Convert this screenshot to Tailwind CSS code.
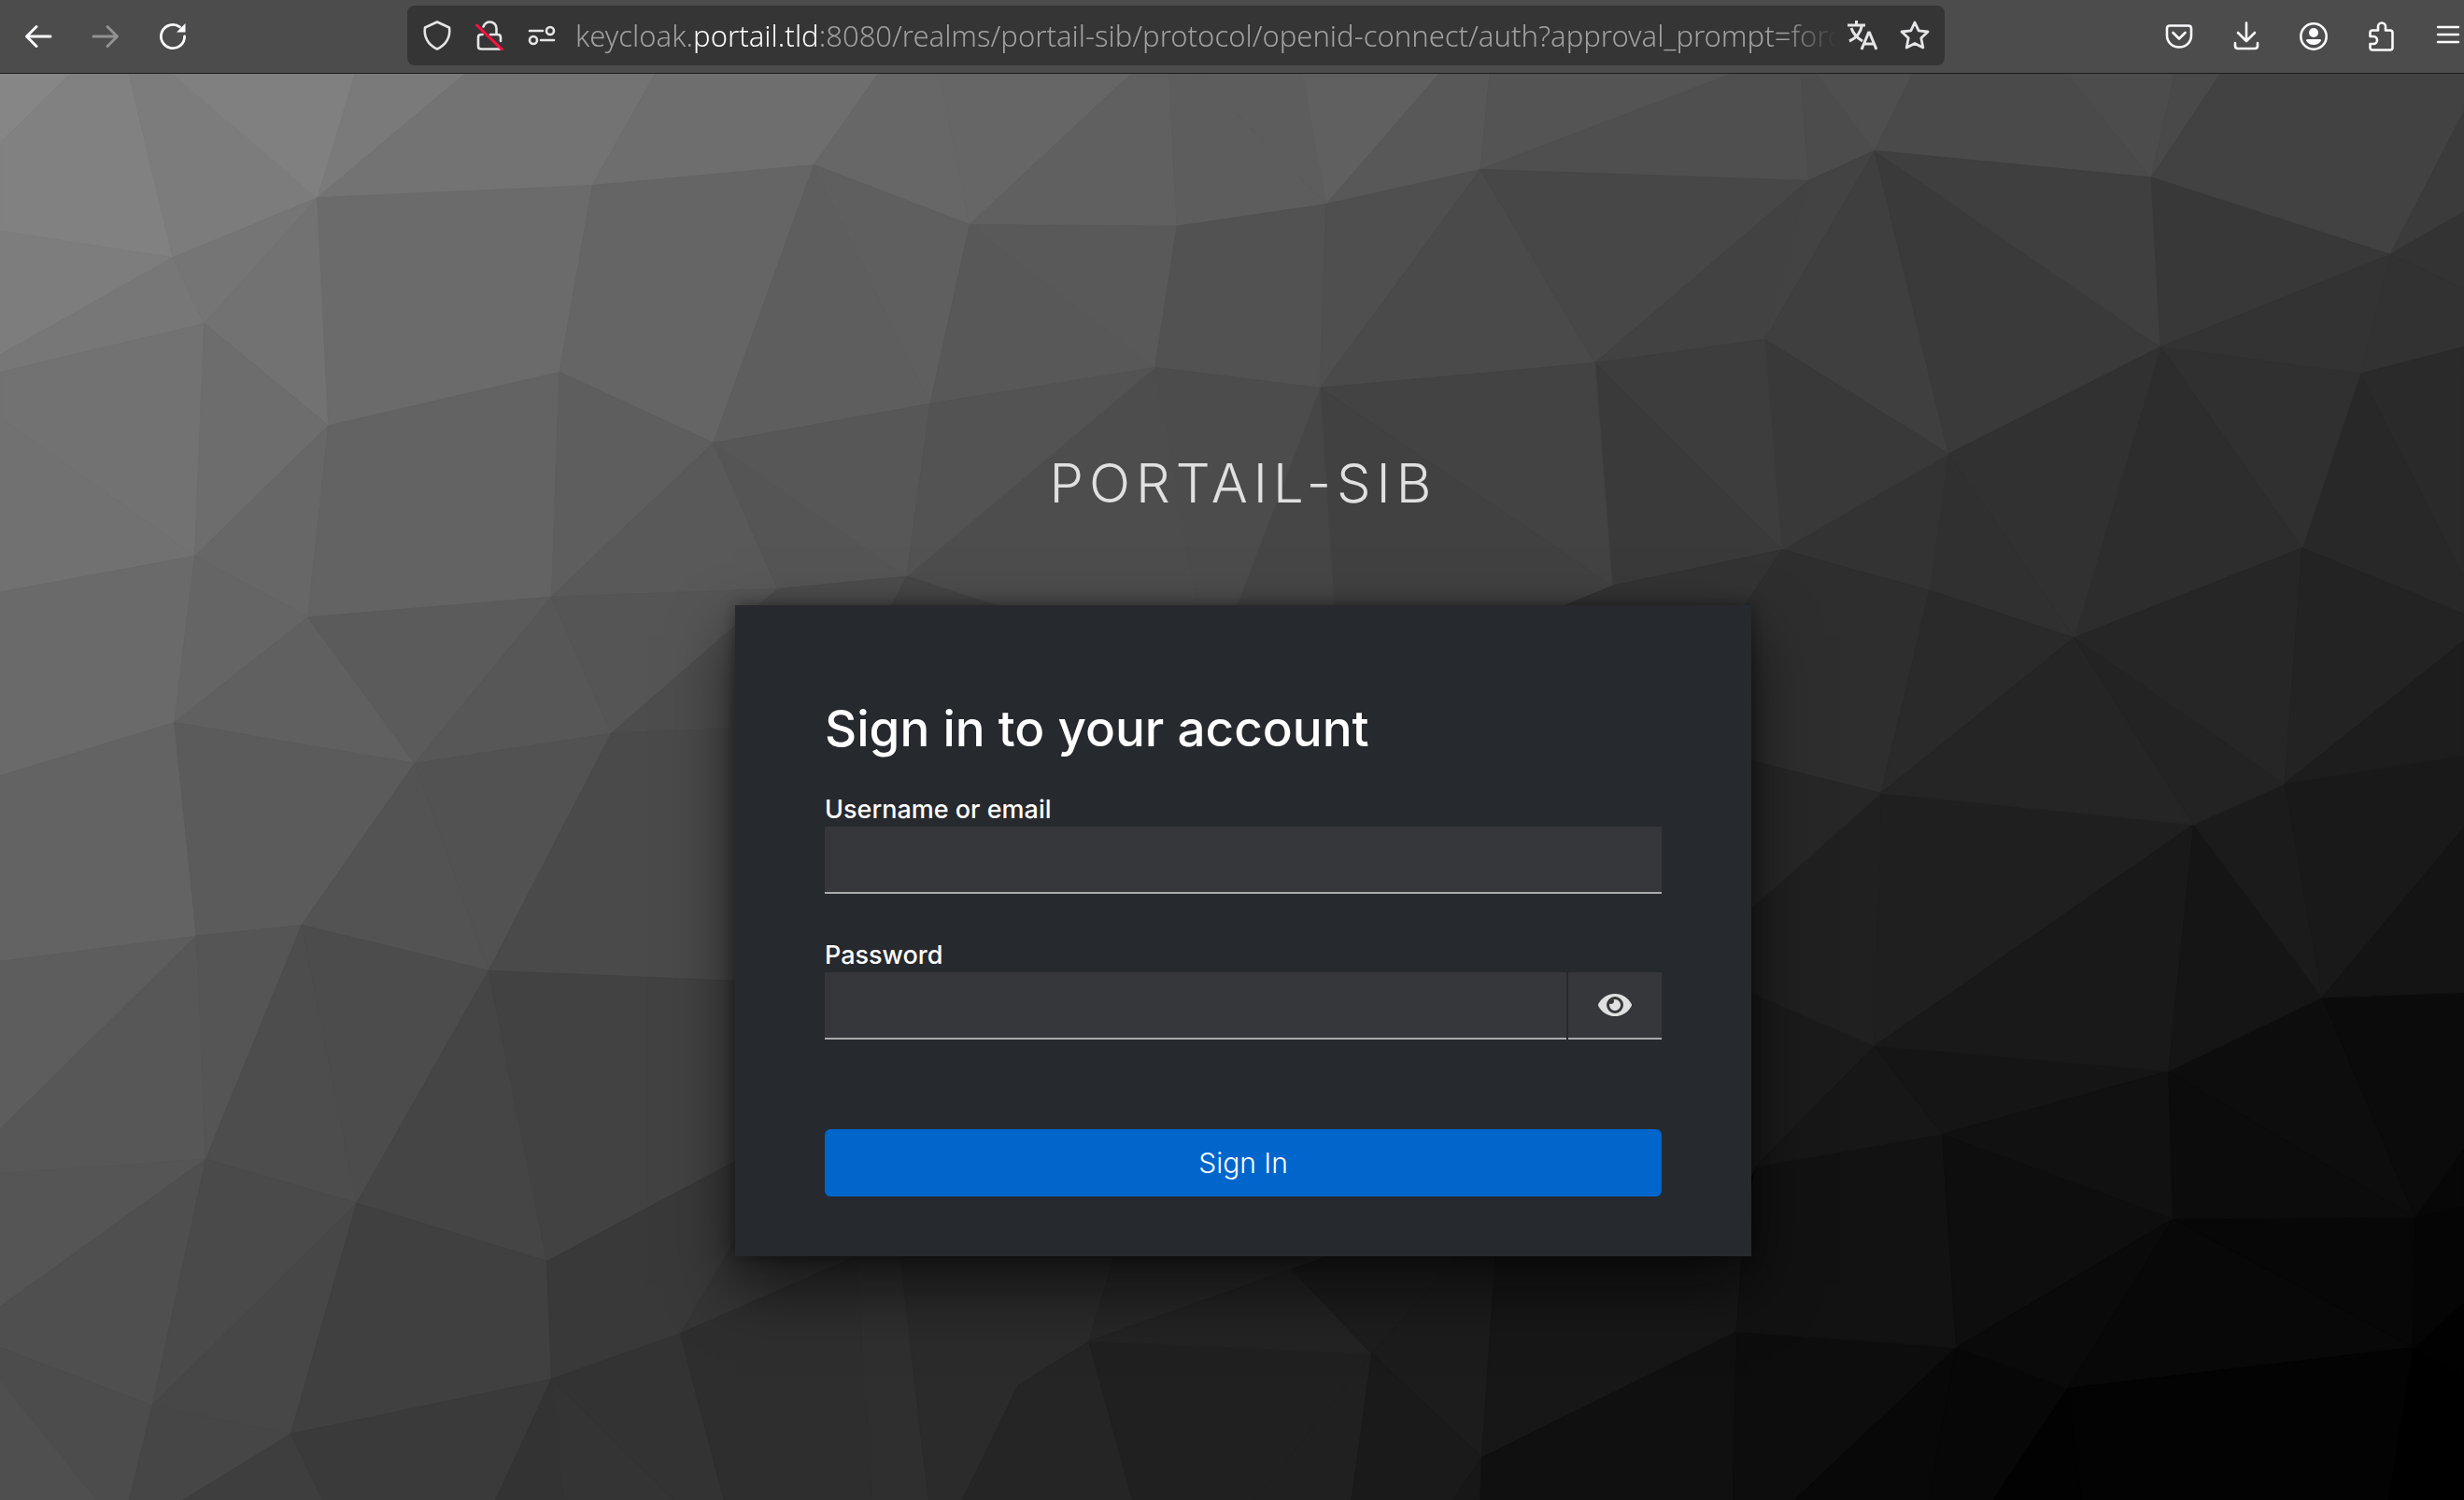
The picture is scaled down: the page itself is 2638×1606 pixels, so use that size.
<!DOCTYPE html>
<html lang="en">
<head>
<meta charset="utf-8">
<meta name="viewport" content="width=device-width, initial-scale=1">
<title>Sign in to portail-sib</title>
<script src="https://cdn.jsdelivr.net/npm/@tailwindcss/browser@4"></script>
</head>
<body class="flex min-h-screen flex-col overflow-x-hidden bg-black font-['Inter',sans-serif]">

<!-- Browser toolbar -->
<header class="flex h-[79px] shrink-0 items-center border-b border-[#1c1b1c] bg-[#4c4c4c] text-[#fbfbfe]">
  <nav class="flex w-[436px] shrink-0 gap-9 pl-[23px]" aria-label="History">
    <button type="button" aria-label="Back" class="flex w-9 justify-center">
      <svg class="size-8" viewBox="0 0 32 32" fill="none" stroke="currentColor" stroke-width="3" stroke-linecap="round" stroke-linejoin="round"><path d="M29 16H4M14 5.500 3.500 16 14 26.500"/></svg>
    </button>
    <button type="button" aria-label="Forward" disabled class="flex w-9 justify-center text-[#929292]">
      <svg class="size-8" viewBox="0 0 32 32" fill="none" stroke="currentColor" stroke-width="3" stroke-linecap="round" stroke-linejoin="round"><path d="M3 16H28M18 5.500 28.500 16 18 26.500"/></svg>
    </button>
    <button type="button" aria-label="Reload" class="flex w-9 justify-center">
      <svg class="size-8" viewBox="0 0 32 32" fill="none" stroke="currentColor" stroke-width="2.800" stroke-linecap="round"><path d="M28.600 16A12.600 12.600 0 1 1 23.500 5.900"/><path d="M29.500 2v9.500h-9.500z" fill="currentColor" stroke="none"/></svg>
    </button>
  </nav>

  <div class="mb-[2px] flex h-16 min-w-0 flex-1 items-center rounded-lg bg-[#353535] px-1 text-[#e6e6e8]">
    <button type="button" aria-label="Tracking protection" class="flex w-14 shrink-0 justify-center">
      <svg class="size-8" viewBox="0 0 32 32" fill="none" stroke="currentColor" stroke-width="2.600" stroke-linejoin="round"><path d="M16 1.500 29 7.500C30.500 17 26 26 16 30.500 6 26 1.500 17 3 7.500z"/></svg>
    </button>
    <button type="button" aria-label="Connection is not secure" class="flex w-14 shrink-0 justify-center">
      <svg class="size-8" viewBox="0 0 32 32" fill="none" stroke="currentColor" stroke-width="2.600" stroke-linecap="round"><path d="M9.500 6.500C11 3 13.500 1.500 16.500 1.500c4 0 7 3 7 7v6M8.500 15H7c-2 0-3 1-3 3v9.500c0 2 1 3 3 3h20M17 15h8c2 0 3 1 3 3v4"/><path d="M2.500 5 29.500 31" stroke="#ff0f3f" stroke-width="3"/></svg>
    </button>
    <button type="button" aria-label="Site permissions" class="flex w-14 shrink-0 justify-center">
      <svg class="size-8" viewBox="0 0 32 32" fill="none" stroke="currentColor" stroke-width="2.600" stroke-linecap="round"><path d="M3 11h14M15 21h14"/><circle cx="25" cy="11" r="4"/><circle cx="7" cy="21" r="4"/></svg>
    </button>
    <div role="textbox" aria-label="Address" tabindex="0" class="ml-2 min-w-0 flex-1 overflow-hidden whitespace-nowrap font-['Noto_Sans',sans-serif] text-[31px] leading-10 font-light text-[#a0a0a0] [mask-image:linear-gradient(to_left,transparent,black_56px)]">keycloak.<span class="text-[#fbfbfe]">portail.tld</span>:8080/realms/portail-sib/protocol/openid-connect/auth?approval_prompt=forc</div>
    <button type="button" aria-label="Translate page" class="flex w-14 shrink-0 justify-center">
      <svg class="size-8" viewBox="0 0 32 32" fill="none" stroke="currentColor" stroke-width="3"><path d="M0 5h19M9.500 0v5M4 8c2 6 7 11 12 14M15.500 5C14 13 9 19 2 22"/><path d="M15 31l7.500-18h1L31 31M18 25h10.500"/></svg>
    </button>
    <button type="button" aria-label="Bookmark this page" class="flex w-14 shrink-0 justify-center">
      <svg class="size-8" viewBox="0 0 32 32" fill="none" stroke="currentColor" stroke-width="2.800" stroke-linejoin="round"><path d="M16 2l4.200 8.800 9.800 1.200-7.200 6.800 2 10.200L16 24.500 7.200 29l2-10.200L2 12l9.800-1.200z"/></svg>
    </button>
  </div>

  <nav class="-mr-px flex w-[557px] shrink-0 justify-end gap-9" aria-label="Browser tools">
    <button type="button" aria-label="Save to Pocket" class="flex w-9 justify-center">
      <svg class="size-8" viewBox="0 0 32 32" fill="none" stroke="currentColor" stroke-width="2.600" stroke-linecap="round" stroke-linejoin="round"><path d="M6 4.500h20c2 0 3 1 3 3V15c0 7-5.500 12.500-13 12.500S3 22 3 15V7.500c0-2 1-3 3-3zM9.500 12l6.500 6.500 6.500-6.500"/></svg>
    </button>
    <button type="button" aria-label="Downloads" class="flex w-9 justify-center">
      <svg class="size-8" viewBox="0 0 32 32" fill="none" stroke="currentColor" stroke-width="2.600" stroke-linecap="round" stroke-linejoin="round"><path d="M16 1.500V20M7 12l9 9 9-9M4 23v3c0 2 1 3 3 3h18c2 0 3-1 3-3v-3"/></svg>
    </button>
    <button type="button" aria-label="Account" class="flex w-9 justify-center">
      <svg class="size-8" viewBox="0 0 32 32" fill="none" stroke="currentColor" stroke-width="2.600"><circle cx="16" cy="16" r="13.700"/><circle cx="16" cy="12" r="5" fill="currentColor" stroke="none"/><path d="M9.500 19h13c1.500 0 2 1 1.200 2-1.700 2.500-4.200 4-7.700 4s-6-1.500-7.700-4c-.8-1-.3-2 1.200-2z" fill="currentColor" stroke="none"/></svg>
    </button>
    <button type="button" aria-label="Extensions" class="flex w-9 justify-center">
      <svg class="size-8" viewBox="0 0 32 32" fill="none" stroke="currentColor" stroke-width="2.600" stroke-linejoin="round"><path d="M4.500 16V12c0-1.500 1-2.500 2.500-2.500h6V5.500a4 4 0 0 1 8 0v4h5c1.500 0 2.500 1 2.500 2.500v16c0 1.500-1 2.500-2.500 2.500H7c-1.500 0-2.500-1-2.500-2.500v-4H8a4 4 0 0 0 0-8z"/></svg>
    </button>
    <button type="button" aria-label="Open application menu" class="flex w-9 justify-center">
      <svg class="size-8" viewBox="0 0 32 32" fill="none" stroke="currentColor" stroke-width="2.400" stroke-linecap="round"><path d="M5 6h22M5 14h22M5 22h22"/></svg>
    </button>
  </nav>
</header>

<main class="relative isolate flex flex-1 flex-col items-center pt-[403px] pb-16 pl-6">
  <svg id="mesh" class="absolute inset-0 -z-10 h-full w-full" viewBox="0 46 1568 908" preserveAspectRatio="none" aria-hidden="true"></svg>

  <h2 class="mb-24 text-center text-[58px] leading-[70px] font-light tracking-[6px] text-[#e0e0e0] uppercase">portail-sib</h2>

  <section class="w-full max-w-[1088px] bg-[#26292d] px-24 pt-24 pb-16 shadow-[0_32px_64px_rgba(3,3,3,0.64),0_0_16px_rgba(3,3,3,0.4)]">
    <h1 class="text-[53px] leading-[72px] font-medium text-white">Sign in to your account</h1>
    <form class="mt-[33px]">
      <label for="username" class="block text-[27px] leading-9 font-medium text-white">Username or email</label>
      <input id="username" type="text" class="block h-[72px] w-full border-b-2 border-[#aaabac] bg-[#36373a] px-4 text-[30px] text-white outline-none">

      <label for="password" class="mt-12 block text-[27px] leading-9 font-medium text-white">Password</label>
      <div class="flex gap-[2px]">
        <input id="password" type="password" class="block h-[72px] min-w-0 flex-1 border-b-2 border-[#aaabac] bg-[#36373a] px-4 text-[30px] text-white outline-none">
        <button type="button" aria-label="Show password" class="flex h-[72px] w-[100px] items-center justify-center border-b-2 border-[#aaabac] bg-[#36373a] text-[#e0e0e0]">
          <svg class="h-8 w-9" viewBox="0 0 576 512" fill="currentColor"><path d="M572.520 241.400C518.290 135.590 410.930 64 288 64S57.680 135.640 3.480 241.410a32.350 32.350 0 0 0 0 29.190C57.710 376.410 165.070 448 288 448s230.320-71.640 284.520-177.410a32.350 32.350 0 0 0 0-29.190zM288 400a144 144 0 1 1 144-144 143.930 143.930 0 0 1-144 144zm0-240a95.310 95.310 0 0 0-25.310 3.790 47.850 47.850 0 0 1-66.900 66.900A95.780 95.780 0 1 0 288 160z"/></svg>
        </button>
      </div>

      <button type="submit" class="mt-24 block h-[72px] w-full rounded-md bg-[#06c] text-[30px] font-light text-white">Sign In</button>
    </form>
  </section>
</main>

<script>
// Low-poly backdrop: named corner points, then faces as "grey: corners".
// A corner is either a name from the table or an explicit x,y pair.
const P = {
  A:'110,163', M:'130,205', B:'202,125', C:'377,117', D:'518,104', E:'617,142', F:'749,143', G:'844,129',
  H:'942,107', I:'1151,114', J:'1193,95', K:'1369,112', L:'1521,161', N:'124,353', O:'209,270', Q:'356,236',
  R:'454,281', S:'592,256', U:'735,233', V:'840,246', W:'1015,230', X:'1123,215', Y:'1240,288', Z:'1375,220',
  AA:'1502,237', AB:'196,392', AC:'351,379', AD:'495,374', AE:'577,366', AF:'1026,372', AG:'1134,349',
  AI:'1228,375', AJ:'1320,405', AK:'1197,504', AL:'1396,524', AM:'1454,498', AN:'1465,348', PP:'111,459',
  AO:'264,485', AP:'389,466', AQ:'125,595', AR:'192,588', AS:'311,617', AT:'131,737', AU:'227,765',
  AV:'348,802', AW:'97,894', AX:'185,912', AY:'351,877', AZ:'433,848', BA:'693,853', BB:'648,881',
  BC:'873,861', BD:'822,807', BE:'943,927', BF:'1105,847', BG:'1117,742', BH:'1245,857', BI:'1236,721',
  BJ:'1193,665', BK:'1380,681', BL:'1478,634', BM:'1383,775', BN:'1537,774', BO:'1536,857', BP:'1316,883'
};
const faces = `
86: 0,46 45,46 0,90
81: 45,46 82,46 A 0,146 0,90
7c: 82,46 110,46 B A
80: 110,46 226,46 B
7a: 226,46 296,46 B
73: 296,46 417,46 C B
6e: 417,46 559,46 D C
67: 559,46 598,46 E D
66: 598,46 720,46 E
60: 720,46 744,46 F E
5d: 744,46 762,46 G F
5d: 762,46 829,46 G
60: 829,46 916,46 G
58: 916,46 948,46 H G
54: 948,46 1102,46 H
4f: 1102,46 1146,46 I H
4c: 1146,46 1156,46 J I
4f: 1156,46 1217,46 J
4a: 1217,46 1315,46 K J
4c: 1315,46 1384,46 K
49: 1384,46 1413,46 K
42: 1413,46 1568,46 1568,70 L K
3b: 1568,70 1568,134 L
33: 1568,134 1568,183 L
32: L 1568,183 1568,220 AA
7d: 0,146 A 0,225
77: 0,225 A M 0,236
75: A B M
72: 0,236 M N 0,265
71: 0,265 N 0,376
72: M B O
6b: B C Q O
65: C D R Q
5e: D S R
5f: D E S
58: E U S
59: E F U
52: F G V U
4f: G H V
4a: H W V
47: H I W
42: I X W
43: I J X
3f: J Y X
3a: J Z Y
3f: J K Z
38: K L Z
33: L AA Z
2a: AA 1568,220 1568,367
28: AA 1568,367 1568,390 AN
30: AA AN Z
2d: Z AN AJ
31: Z AJ Y
30: Y AJ AI
33: Y AI AG
39: X Y AG
3d: W X AG
3a: W AG AF
43: V W AF
41: V AF 1022,430 849,430 849,385
46: V 787,385 787,400 849,400 849,385
4c: U V 787,385 787,400 762,400 762,385
4d: U 762,385 762,400 681,400 AE
6d: M O N
67: N O AB
63: O Q AC AB
5e: Q R AC
59: R AD AC
55: R AE AD
57: R S AE
53: S U AE
4c: AD AE 560,400 467,500 467,400
46: AE 560,400 681,400
33: AF AG 1115,400 995,400 995,385
2e: AG AI AK 1100,480 1100,400
6a: 0,376 N PP 0,493
65: N AB PP
60: AB AO PP
5b: AB AC AO
57: AC AP AO
55: AC AD AP
4d: AD 480,400 480,463 AP
63: 0,493 PP AQ 0,611
5b: PP AO AR AQ
53: AO AS AR
52: AO AP AS
4a: AP 480,462 480,624 AS
5d: 0,611 AQ 0,718
57: 0,718 AQ AT 0,746
55: 0,746 AT 0,831
55: AQ AR AT
4d: AR AU AT
4c: AR AS AU
45: AS AV AU
42: AS 480,624 480,732 AV
4f: 0,831 AT AW 0,857
4a: AT AU AW
47: AU AX AW
40: AU AV AY AX
39: AV 480,732 480,780 AZ AY
4c: 0,857 AW 82,955 62,955 0,878
4f: 0,878 62,955 0,955
46: AW AX 115,955 82,955
3e: AX 115,955 206,955
3a: AX AY 315,955 206,955
33: AY 315,955 359,955
34: AY 359,955 430,955
33: AY AZ 461,955 430,955
35: AZ 467,790 480,770 573,770 573,799 545,799
2e: AZ 461,955 555,955 545,799
2f: 545,799 573,799 591,955 555,955
2b: 573,799 573,780 709,780 709,799 BA BB 612,955 591,955
25: BB BA 721,955 612,955
20: BA BC 798,955 721,955
27: 709,799 709,780 845,780 845,799 BD BA
23: BA BD BC
1d: BD 845,799 845,780 928,780 928,799 BC
1c: BC 928,799 928,780 953,780 BE
20: BC 798,955 860,955
1a: BC 860,955 924,955 BE
17: BE 924,955 942,955
17: BE 953,780 1110,780 BF
10: BE BF 1103,955 942,955
0d: BF BH 1141,955 1103,955
08: BH 1141,955 1227,955
07: BH BP 1268,955 1227,955
12: BF 1110,780 BG BI BH
0e: BI BM BH
0a: BH BM BP
08: BM BO BP
07: BM BN BO
02: BP 1268,955 1325,955
03: BP BO 1520,955 1325,955
00: BO 1520,955 1568,955 1568,877
01: BO 1568,877 1568,828
05: BN BO 1568,828 1568,767
07: BN 1568,767 1568,730
1b: BJ BG 1100,780 1100,625
17: BG BJ BI
15: BJ BK BI
11: BI BK BM
0c: BK BN BM
0d: BK BL BN
0b: BL 1568,631 1568,730 BN
20: AK 1100,590 1100,625 BJ
1f: AK AL BJ
19: AL BK BJ
15: AL BL BK
1b: AL AM BL
19: AM 1568,480 1568,526 BL
14: BL 1568,526 1568,631
27: AK 1100,590 1100,480
2a: AI AJ AK
25: AJ AL AK
23: AJ AM AL
26: AJ AN AM
23: AN 1568,390 1568,407 AM
1d: AM 1568,407 1568,480`;
const mesh = document.getElementById('mesh');
for (const row of faces.trim().split('\n')) {
  const [grey, corners] = row.split(': ');
  const face = document.createElementNS('http://www.w3.org/2000/svg', 'polygon');
  face.setAttribute('points', corners.split(' ').map(c => P[c] || c).join(' '));
  face.setAttribute('fill', '#' + grey.repeat(3));
  face.setAttribute('stroke', '#' + grey.repeat(3));
  face.setAttribute('stroke-width', '0.600');
  mesh.appendChild(face);
}
</script>
</body>
</html>
